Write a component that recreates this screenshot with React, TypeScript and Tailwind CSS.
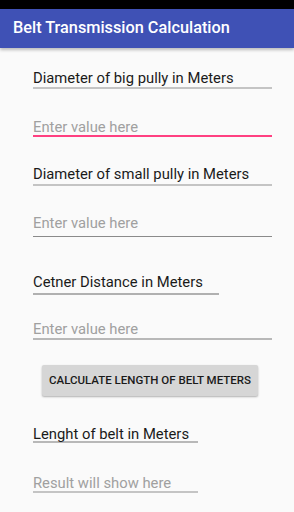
import type { ReactNode } from "react";

const font = { fontFamily: "Roboto, 'Noto Sans', sans-serif" };

function Line({
  className,
  children,
}: {
  className: string;
  children: ReactNode;
}) {
  return <div className={`pt-[2px] leading-[20px] ${className}`}>{children}</div>;
}

export default function App() {
  return (
    <div className="flex h-[512px] w-[294px] flex-col overflow-hidden bg-[#fafafa]" style={font}>
      <div className="h-[9px] shrink-0 bg-black" />
      <header className="relative z-10 flex h-[39px] shrink-0 items-center bg-[#3f51b5] pl-[13px] shadow-[0_2px_3px_rgba(0,0,0,0.25)]">
        <h1 className="text-[16.3px] font-medium text-white">Belt Transmission Calculation</h1>
      </header>

      <div className="flex flex-col px-[33px] text-[14.8px]">
        <Line className="mt-[18px] h-[23px] w-[239px] border-b-2 border-[#c4c4c4] text-[#1a1a1a]">
          Diameter of big pully in Meters
        </Line>
        <Line className="mt-[26px] h-[22px] w-[239px] border-b-2 border-[#ff4081] text-[#a0a0a0]">
          Enter value here
        </Line>
        <Line className="mt-[25px] h-[24px] w-[239px] border-b-2 border-[#c4c4c4] text-[#1a1a1a]">
          Diameter of small pully in Meters
        </Line>
        <Line className="mt-[25px] h-[26px] w-[239px] border-b border-[#8a8a8a] text-[#a0a0a0]">
          Enter value here
        </Line>
        <Line className="mt-[33px] h-[25px] w-[186px] border-b-2 border-[#b0b0b0] text-[#1a1a1a]">
          Cetner Distance in Meters
        </Line>
        <Line className="mt-[22px] h-[23px] w-[239px] border-b-2 border-[#b8b8b8] text-[#a0a0a0]">
          Enter value here
        </Line>

        <button className="mt-[25px] ml-[9px] flex h-[31px] w-[216px] items-center justify-center rounded-[2px] bg-[#d6d6d6] text-[11.5px] font-medium text-[#1a1a1a] shadow-[0_1px_2px_rgba(0,0,0,0.3)]">
          CALCULATE LENGTH OF BELT METERS
        </button>

        <Line className="mt-[26px] h-[21px] w-[165px] border-b-2 border-[#b8b8b8] text-[#1a1a1a]">
          Lenght of belt in Meters
        </Line>
        <Line className="mt-[28px] h-[22px] w-[165px] border-b-2 border-[#c4c4c4] text-[#a0a0a0]">
          Result will show here
        </Line>
      </div>
    </div>
  );
}
